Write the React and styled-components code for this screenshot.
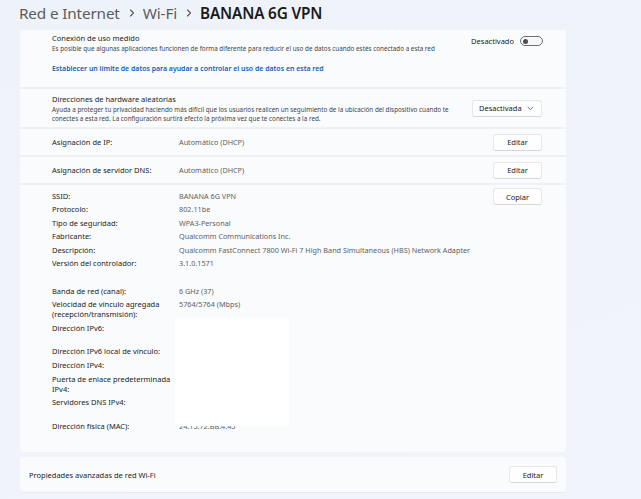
import React from 'react';
import styled, { createGlobalStyle } from 'styled-components';

const Global = createGlobalStyle`
  html, body { margin: 0; padding: 0; background: #eff3fa; }
  body {
    font-family: "Noto Sans", "Open Sans", sans-serif;
    color: #1b1b1b;
  }
  * { box-sizing: border-box; }
`;

const Page = styled.div`
  width: 641px;
  height: 499px;
  overflow: hidden;
  background: linear-gradient(160deg, #eef2f9 0%, #f0f4fa 60%, #f1f4fa 100%);
  padding-left: 20px;
`;

const Breadcrumb = styled.header`
  height: 30px;
  display: flex;
  align-items: center;
  padding: 0 0 4px 0;
  margin-left: -1px;
  font-size: 15.3px;
  letter-spacing: -0.15px;
  white-space: nowrap;
`;

const Crumb = styled.span`
  color: ${(p) => (p.$current ? '#1a1a1a' : '#5c5c5c')};
  font-weight: ${(p) => (p.$current ? 600 : 400)};
`;

const Chevron = styled.svg`
  width: 6px;
  height: 8px;
  margin: 0 8px 0 9px;
  flex: none;
`;

const Card = styled.section`
  width: 546px;
  display: flex;
  flex-direction: column;
  gap: 2px;
  background: #edf0f5;
  border-radius: 0 0 4px 4px;
  overflow: hidden;
`;

const Row = styled.div`
  position: relative;
  background: #fafbfd;
  display: flex;
  justify-content: space-between;
  align-items: ${(p) => p.$align || 'center'};
  height: ${(p) => p.$h}px;
  padding: ${(p) => p.$pad || '0 24px 0 32px'};
`;

const TextBlock = styled.div`
  display: flex;
  flex-direction: column;
`;

const Title = styled.div`
  font-size: 7.5px;
  line-height: 11px;
  color: #1b1b1b;
`;

const Desc = styled.div`
  font-size: 6.32px;
  line-height: 9px;
  color: #444;
  white-space: nowrap;
`;

const Link = styled.a`
  font-size: 6.95px;
  line-height: 11px;
  margin-top: 10px;
  color: #145cb0;
  font-weight: 600;
  text-decoration: none;
  white-space: nowrap;
`;

const ToggleGroup = styled.div`
  display: flex;
  align-items: center;
  gap: 6px;
  margin-top: 3px;
  height: 10px;
  font-size: 7.5px;
  color: #1b1b1b;
`;

const Toggle = styled.span`
  position: relative;
  width: 23px;
  height: 10px;
  border: 1px solid #6f6f6f;
  border-radius: 5px;
  background: #f7f8fa;
  &::after {
    content: '';
    position: absolute;
    left: 2px;
    top: 1.5px;
    width: 5px;
    height: 5px;
    border-radius: 50%;
    background: #4d4d4d;
  }
`;

const Dropdown = styled.div`
  width: 70px;
  height: 17px;
  display: flex;
  align-items: center;
  justify-content: space-between;
  padding: 0 7px 0 6px;
  background: #fefefe;
  border: 1px solid #e6e7ea;
  border-bottom-color: #d6d7da;
  border-radius: 3px;
  font-size: 7.5px;
  color: #1b1b1b;
`;

const Button = styled.button`
  width: ${(p) => p.$w || 49}px;
  height: 17px;
  padding: 0;
  background: #fefefe;
  border: 1px solid #e6e7ea;
  border-bottom-color: #d6d7da;
  border-radius: 3px;
  font-family: inherit;
  font-size: 7.5px;
  color: #1b1b1b;
  align-self: ${(p) => p.$self || 'auto'};
  margin-top: ${(p) => p.$mt || 0}px;
`;

const Pair = styled.div`
  display: flex;
  align-items: center;
`;

const Label = styled.div`
  width: ${(p) => p.$w || 127}px;
  font-size: 7.5px;
  line-height: 10px;
  color: #1b1b1b;
  white-space: nowrap;
`;

const Value = styled.div`
  font-size: 7.25px;
  line-height: 10px;
  color: #5e5e5e;
  white-space: nowrap;
  min-height: ${(p) => (p.$lines || 1) * 10}px;
`;

const PropGrid = styled.div`
  display: grid;
  grid-template-columns: 118px 1fr;
  column-gap: 9px;
  row-gap: 3.6px;
  margin-top: 2.5px;
  align-content: start;
`;

const Spacer = styled.div`
  grid-column: 1 / -1;
  height: 10px;
`;

const Redaction = styled.div`
  position: absolute;
  left: 155px;
  top: 133px;
  width: 114px;
  height: 108px;
  background: #ffffff;
`;

const FooterCard = styled.section`
  width: 546px;
  height: 36px;
  margin-top: 5px;
  background: #fafbfd;
  border-radius: 4px;
  border-bottom: 1px solid #e7e9ee;
  display: flex;
  align-items: center;
  justify-content: space-between;
  padding: 0 9px 0 9px;
  font-size: 7.5px;
  color: #1b1b1b;
`;

const ChevronRight = () => (
  <Chevron viewBox="0 0 6 8">
    <path d="M1.5 1 L4.5 4 L1.5 7" fill="none" stroke="#555" strokeWidth="1.1" strokeLinecap="round" strokeLinejoin="round" />
  </Chevron>
);

const ChevronDown = () => (
  <svg width="7" height="5" viewBox="0 0 7 5">
    <path d="M1 1.2 L3.5 3.6 L6 1.2" fill="none" stroke="#6a6a6a" strokeWidth="0.9" strokeLinecap="round" strokeLinejoin="round" />
  </svg>
);

const props = [
  ['SSID:', 'BANANA 6G VPN'],
  ['Protocolo:', '802.11be'],
  ['Tipo de seguridad:', 'WPA3-Personal'],
  ['Fabricante:', 'Qualcomm Communications Inc.'],
  ['Descripción:', 'Qualcomm FastConnect 7800 Wi-Fi 7 High Band Simultaneous (HBS) Network Adapter'],
  ['Versión del controlador:', '3.1.0.1571'],
  null,
  ['Banda de red (canal):', '6 GHz (37)'],
  [['Velocidad de vínculo agregada', '(recepción/transmisión):'], '5764/5764 (Mbps)'],
  ['Dirección IPv6:', '', 2],
  ['Dirección IPv6 local de vínculo:', ''],
  ['Dirección IPv4:', ''],
  [['Puerta de enlace predeterminada', 'IPv4:'], ''],
  ['Servidores DNS IPv4:', '', 2],
  ['Dirección física (MAC):', '24:15:72:BB:4:45'],
];

export default function App() {
  return (
    <>
      <Global />
      <Page>
        <Breadcrumb>
          <Crumb>Red e Internet</Crumb>
          <ChevronRight />
          <Crumb>Wi-Fi</Crumb>
          <ChevronRight />
          <Crumb $current>BANANA 6G VPN</Crumb>
        </Breadcrumb>

        <Card>
          <Row $h={57} $align="flex-start" $pad="3px 23px 0 32px">
            <TextBlock>
              <Title>Conexión de uso medido</Title>
              <Desc>
                Es posible que algunas aplicaciones funcionen de forma diferente para reducir el uso de datos cuando estés conectado a esta red
              </Desc>
              <Link href="#">Establecer un límite de datos para ayudar a controlar el uso de datos en esta red</Link>
            </TextBlock>
            <ToggleGroup>
              Desactivado
              <Toggle />
            </ToggleGroup>
          </Row>

          <Row $h={38}>
            <TextBlock>
              <Title>Direcciones de hardware aleatorias</Title>
              <Desc>
                Ayuda a proteger tu privacidad haciendo más difícil que los usuarios realicen un seguimiento de la ubicación del dispositivo cuando te
                <br />
                conectes a esta red. La configuración surtirá efecto la próxima vez que te conectes a la red.
              </Desc>
            </TextBlock>
            <Dropdown>
              Desactivada
              <ChevronDown />
            </Dropdown>
          </Row>

          <Row $h={26}>
            <Pair>
              <Label>Asignación de IP:</Label>
              <Value>Automático (DHCP)</Value>
            </Pair>
            <Button>Editar</Button>
          </Row>

          <Row $h={26}>
            <Pair>
              <Label>Asignación de servidor DNS:</Label>
              <Value>Automático (DHCP)</Value>
            </Pair>
            <Button>Editar</Button>
          </Row>

          <Row $h={267} $align="flex-start" $pad="3px 24px 0 32px">
            <PropGrid>
              {props.map((p, i) =>
                p === null ? (
                  <Spacer key={i} />
                ) : (
                  <React.Fragment key={i}>
                    <Label $w={118}>
                      {Array.isArray(p[0]) ? (
                        <>
                          {p[0][0]}
                          <br />
                          {p[0][1]}
                        </>
                      ) : (
                        p[0]
                      )}
                    </Label>
                    <Value $lines={p[2]}>{p[1]}</Value>
                  </React.Fragment>
                )
              )}
            </PropGrid>
            <Button $self="flex-start">Copiar</Button>
            <Redaction />
          </Row>
        </Card>

        <FooterCard>
          <span>Propiedades avanzadas de red Wi-Fi</span>
          <Button $w={48}>Editar</Button>
        </FooterCard>
      </Page>
    </>
  );
}
